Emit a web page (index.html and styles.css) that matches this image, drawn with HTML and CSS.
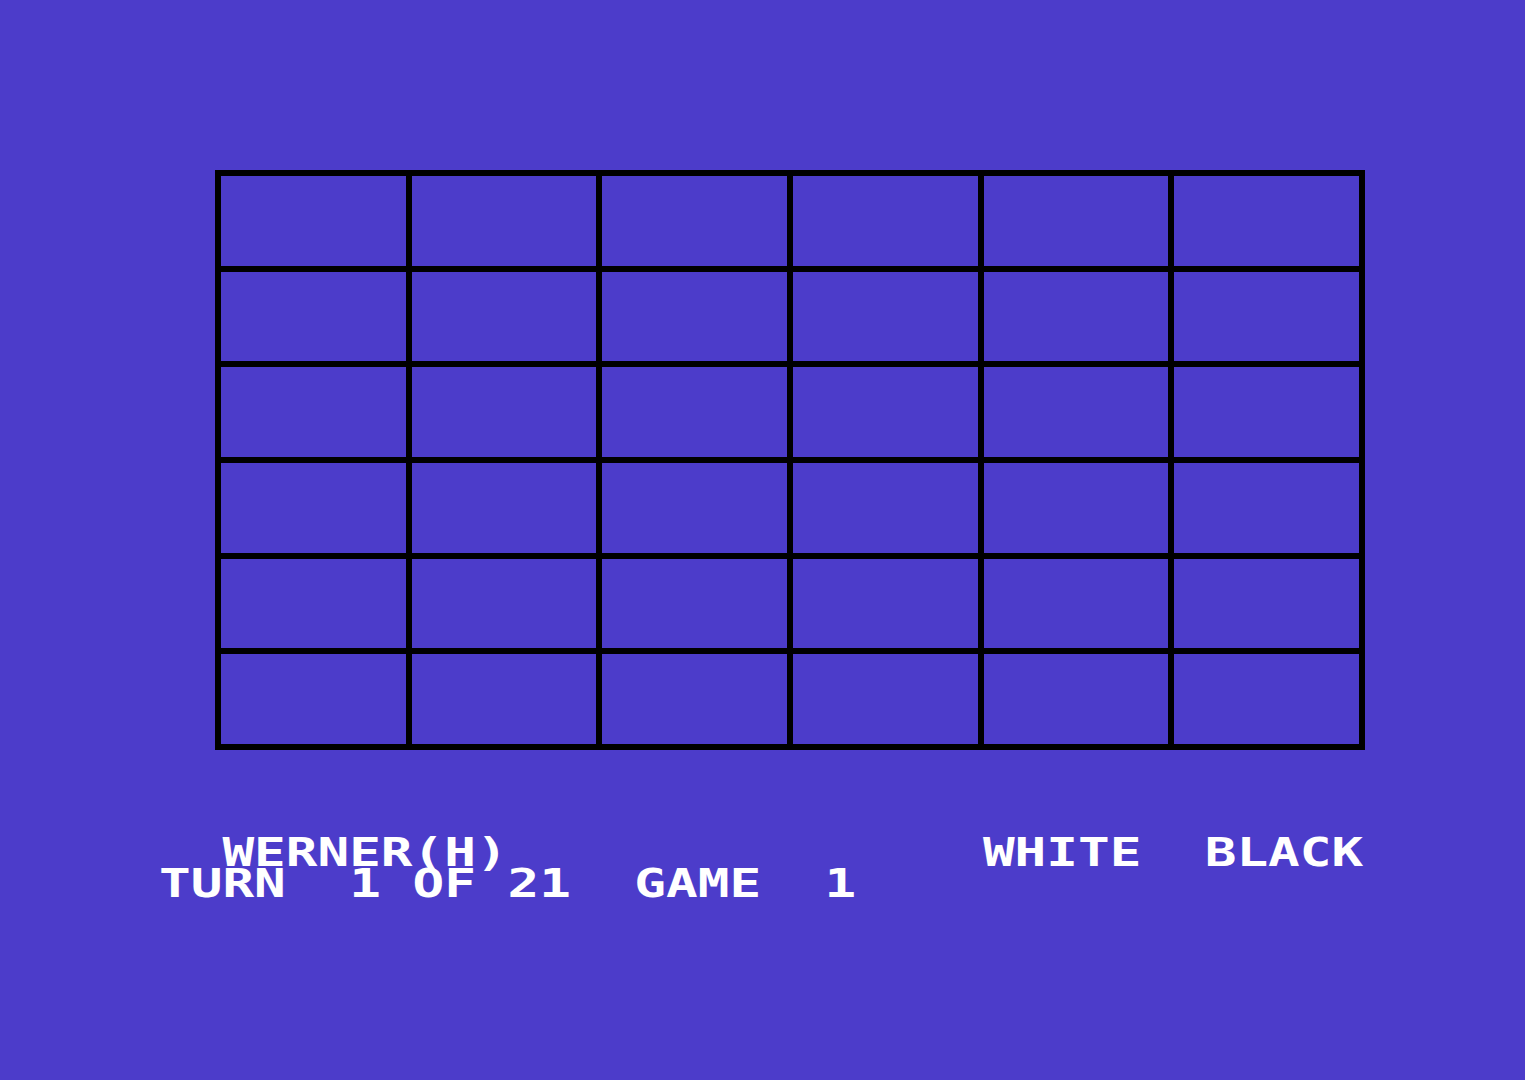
FILE: index.html
```html
<!DOCTYPE html>
<html lang="en">

<head>
    <meta charset="UTF-8">
    <title>Werner</title>
    <link rel="stylesheet" href="styles.css">
</head>

<body>
    <div class="screen">
        <div class="board">
            <div class="cell"></div><div class="cell"></div><div class="cell"></div><div class="cell"></div><div class="cell"></div><div class="cell"></div>
            <div class="cell"></div><div class="cell"></div><div class="cell"></div><div class="cell"></div><div class="cell"></div><div class="cell"></div>
            <div class="cell"></div><div class="cell"></div><div class="cell"></div><div class="cell"></div><div class="cell"></div><div class="cell"></div>
            <div class="cell"></div><div class="cell"></div><div class="cell"></div><div class="cell"></div><div class="cell"></div><div class="cell"></div>
            <div class="cell"></div><div class="cell"></div><div class="cell"></div><div class="cell"></div><div class="cell"></div><div class="cell"></div>
            <div class="cell"></div><div class="cell"></div><div class="cell"></div><div class="cell"></div><div class="cell"></div><div class="cell"></div>
        </div>

        <!-- status lines -->
        <div class="status">
            <div class="line">  WERNER(H)               WHITE  BLACK</div>
            <div class="line">TURN  1 OF 21  GAME  1</div>
        </div>
    </div>
</body>

</html>
```

FILE: styles.css
```css
body {
    margin: 0;
    background: #4c3cca;
    height: 100vh;
    overflow: hidden;
}

.screen {
    padding-top: 170px;
}

.board {
    margin-left: 215px;
    width: 1150px;
    height: 580px;
    box-sizing: border-box;
    padding: 6px;
    background: #000;
    display: grid;
    grid-template-columns: repeat(6, 1fr);
    grid-template-rows: repeat(6, 1fr);
    gap: 6px;
}

.cell {
    background: #4c3cca;
}

.status {
    margin-top: 87px;
    padding-left: 159px;
    color: #fff;
    font-family: "DejaVu Sans Mono", monospace;
    font-weight: bold;
    font-size: 38.4px;
    line-height: 31px;
}

.line {
    width: max-content;
    white-space: pre;
    transform: scaleX(1.371);
    transform-origin: left top;
}
```
